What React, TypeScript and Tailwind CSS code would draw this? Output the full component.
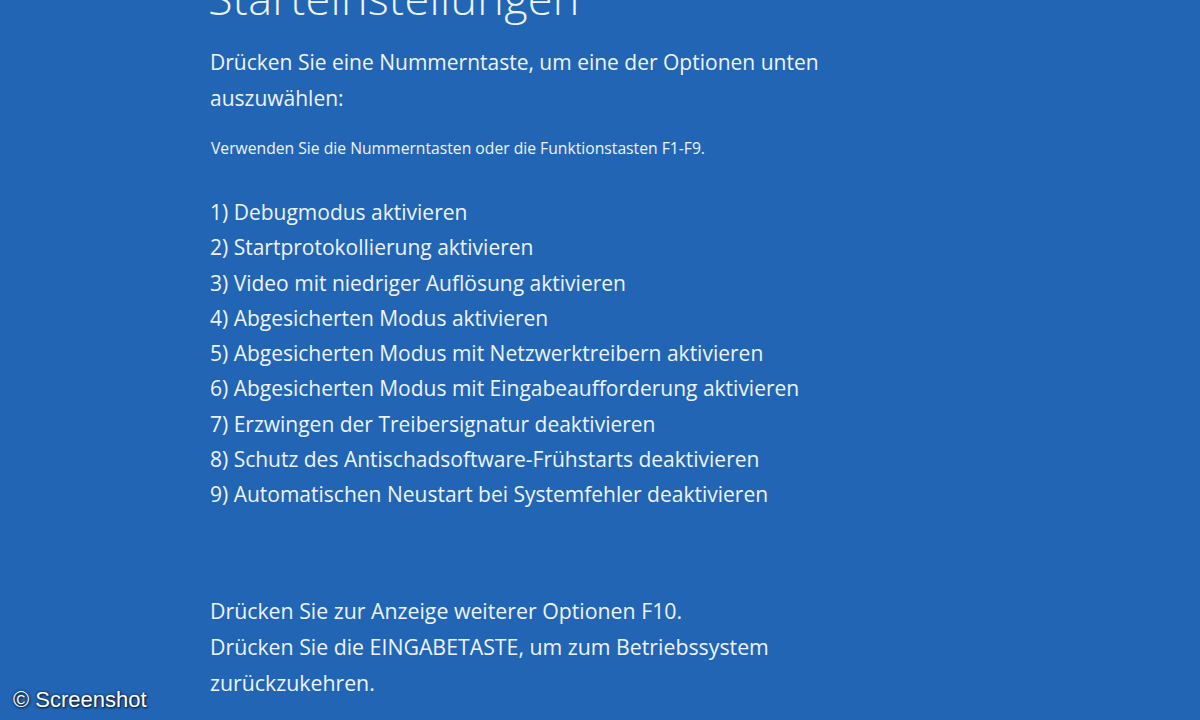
import React from "react";

const items = [
  "1) Debugmodus aktivieren",
  "2) Startprotokollierung aktivieren",
  "3) Video mit niedriger Auflösung aktivieren",
  "4) Abgesicherten Modus aktivieren",
  "5) Abgesicherten Modus mit Netzwerktreibern aktivieren",
  "6) Abgesicherten Modus mit Eingabeaufforderung aktivieren",
  "7) Erzwingen der Treibersignatur deaktivieren",
  "8) Schutz des Antischadsoftware-Frühstarts deaktivieren",
  "9) Automatischen Neustart bei Systemfehler deaktivieren",
];

export default function App() {
  return (
    <div
      className="w-[1200px] h-[720px] overflow-hidden bg-[#2265b5] text-[#eef4fb] relative"
      style={{ fontFamily: '"Open Sans", "Noto Sans", sans-serif' }}
    >
      <div className="pl-[208px] flex flex-col">
        <h1 className="text-[45px] font-light leading-[56px] mt-[-30px] tracking-[0.3px]">
          Starteinstellungen
        </h1>
        <p className="pl-[2px] mt-[18px] text-[21px] leading-[36px] w-[660px]">
          Drücken Sie eine Nummerntaste, um eine der Optionen unten auszuwählen:
        </p>
        <p className="pl-[3px] mt-[22px] text-[15.7px] leading-[20px]">
          Verwenden Sie die Nummerntasten oder die Funktionstasten F1-F9.
        </p>
        <ul className="pl-[2px] mt-[37px] flex flex-col text-[21px] leading-[35.3px]">
          {items.map((t) => (
            <li key={t}>{t}</li>
          ))}
        </ul>
        <div className="pl-[2px] mt-[80px] text-[21.3px] leading-[36px]">
          <p>Drücken Sie zur Anzeige weiterer Optionen F10.</p>
          <p className="w-[620px]">
            Drücken Sie die EINGABETASTE, um zum Betriebssystem zurückzukehren.
          </p>
        </div>
      </div>
      <div
        className="absolute left-[13px] top-[683px] text-[22px] text-white"
        style={{
          fontFamily: '"Liberation Sans", Arial, sans-serif',
          textShadow: "0 0 3px #0a1f3a, 1px 1px 2px #0a1f3a",
        }}
      >
        © Screenshot
      </div>
    </div>
  );
}
